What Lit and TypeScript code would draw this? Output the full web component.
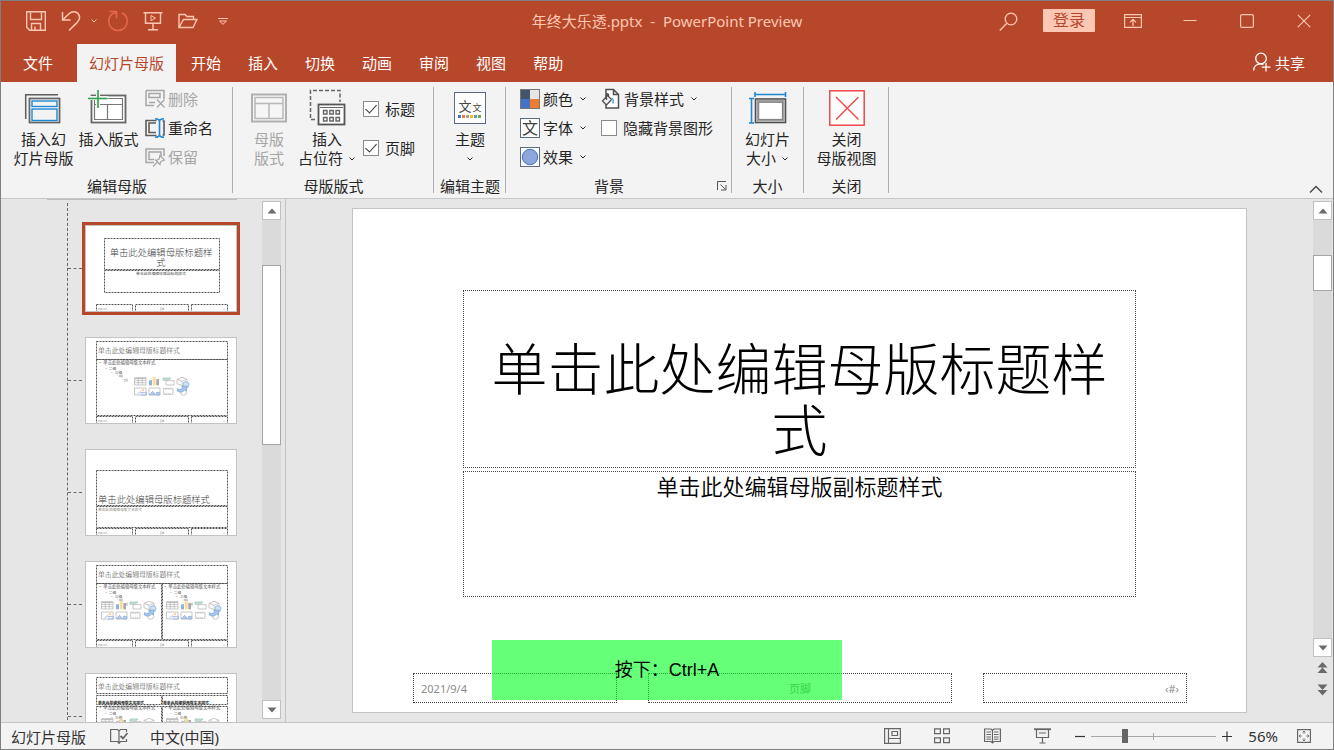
import { LitElement, html, svg, css, nothing, TemplateResult } from "lit";
import { customElement, property, state } from "lit/decorators.js";
import { classMap } from "lit/directives/class-map.js";

const icon = (w: number, h: number, body: TemplateResult | TemplateResult[]) => html`<svg
  width=${w} height=${h} viewBox="0 0 ${w} ${h}" fill="none" stroke="currentColor" aria-hidden="true">${body}</svg>`;

const chevron = () => icon(8, 6, svg`<path d="M1.5 1.5L4 4L6.5 1.5"/>`);

const icons = {
  save: () => icon(20, 20, svg`<path stroke-width="1.4" d="M.7 .7H19.3V19.3H3.7L.7 16.3ZM4.5 .7V8.5H15.5V.7M5.5 19V12.5H14.5V19M9 19V15.5"/>`),
  undo: () => icon(20, 22, svg`<path stroke-width="1.5" d="M1.5 2V10H9.5M1.8 9.7L8 3.8C11 1 15 1.200 17 3.600C19.500 6.500 18.500 10 16 12.600L8 20.500"/>`),
  redo: () => icon(22, 22, svg`<path stroke-width="1.5" d="M2.500 1.500H9.500V8.500M9 2.500C4.500 3.500 1.700 7 1.700 11.300C1.700 16.500 5.900 20.500 11 20.500S20.300 16.500 20.300 11.300C20.300 7.500 18 4.300 14.800 2.800"/>`),
  show: () => icon(20, 20, svg`<path stroke-width="1.4" d="M.5 1.700H19.500M2.500 1.700V12.300H17.500V1.700M10 12.500V18.500M5 18.800H15"/><path d="M8 4.500V9.700L12.500 7.100Z"/>`),
  folder: () => icon(20, 16, svg`<path stroke-width="1.400" d="M1 14.500V1.500H7L9 3.500H15.500V6.500M1 14.500L5.500 6.500H19L15 14.500Z"/>`),
  more: () => icon(12, 8, svg`<path d="M1 1.500H11M2.500 4L6 7.300L9.500 4Z"/>`),
  search: () => icon(19, 20, svg`<circle cx="12" cy="7" r="5.800" stroke-width="1.300"/><path stroke-width="1.300" d="M7.800 11.200L.8 18.500"/>`),
  ribbonOptions: () => icon(18, 14, svg`<path stroke-width="1.200" d="M.6 .6H17.400V13.400H.6ZM.6 3.500H17.400M9 12V5.500M6 8.300L9 5.300L12 8.300"/>`),
  minimize: () => icon(14, 14, svg`<path d="M.5 6.500H13.500"/>`),
  maximize: () => icon(14, 14, svg`<rect x=".6" y=".6" width="12.800" height="12.800" rx="1.500" stroke-width="1.200"/>`),
  close: () => icon(14, 14, svg`<path stroke-width="1.200" d="M.8 .8L13.200 13.200M13.200 .8L.8 13.200"/>`),
  share: () => icon(18, 20, svg`<circle cx="8" cy="6.500" r="5.300" stroke-width="1.300"/><path stroke-width="1.300" d="M.7 18.500C.7 14.500 3.500 11.800 7.500 11.800C9 11.800 10 12.200 10.500 12.500M13 11V19.500M8.700 15.200H17.500"/>`),
  insertMaster: () => icon(42, 36, svg`<path stroke="#5c5c5c" stroke-width="1.500" d="M2.700 29V4.700H35"/><rect x="6.500" y="8.500" width="30" height="24" fill="#fff" stroke="#666" stroke-width="1.800"/><rect x="9" y="11" width="25" height="5.500" fill="#f3f3f3" stroke="#1e87d0" stroke-width="1.400"/><rect x="9" y="19" width="25" height="11.500" fill="#f3f3f3" stroke="#1e87d0" stroke-width="1.400"/>`),
  insertLayout: () => icon(43, 36, svg`<rect x="4.500" y="5.500" width="34" height="27" fill="#fff" stroke="#666" stroke-width="1.800"/><path stroke="#777" stroke-width="1.200" d="M7.500 30V8.500H35.500V29.500H7.500M7.500 14.500H35.500M20.500 14.500V29.500"/><path stroke="#f3f3f3" stroke-width="4" d="M11 0V17M1 8H21"/><path stroke="#2e9e4f" stroke-width="1.600" d="M11 0V18M1 8.500H20.500"/>`),
  remove: () => icon(20, 20, svg`<path stroke="#a6a6a6" stroke-width="1.500" d="M1 1.500H19V10M1 1.500V16.500H9M4 13.500H10M4 8.500H15V4.500H4Z"/><path stroke="#a6a6a6" stroke-width="1.200" d="M12 10.500L19.500 18.500M19.500 10.500L12 18.500"/>`),
  rename: () => icon(20, 20, svg`<path stroke="#5c5c5c" stroke-width="1.600" d="M11.500 2.500H1V17.500H11.500M11 5H4V14.500H11M17.500 3H19V17H17.500"/><path stroke="#1e87d0" stroke-width="1.600" d="M10 .8Q14 .8 14.500 3Q15 .8 19 .8M14.500 3V17M10 19.200Q14 19.200 14.500 17Q15 19.200 19 19.200"/>`),
  keep: () => icon(20, 20, svg`<path stroke="#a6a6a6" stroke-width="1.500" d="M19 9V2H1V15.500H9M16 9V5H4V12.500H9"/><path stroke="#a6a6a6" stroke-width="1.200" d="M8 19.500L12 15.500M10 12.500L15.500 18M11.500 13.500L14 12L15 8.500L19.500 13L16 14.500L14.800 17"/>`),
  masterLayout: () => icon(38, 36, svg`<rect x="2" y="4.500" width="34" height="27" fill="#f6f6f6" stroke="#b0b0b0" stroke-width="2"/><path stroke="#b8b8b8" stroke-width="1.500" d="M5 7.500H33V28.500H5ZM5 13.500H33M19 13.500V28.500"/>`),
  placeholder: () => icon(38, 38, svg`<path stroke="#666" stroke-width="1.500" stroke-dasharray="4 2" d="M7 30.500H2.500V1.500H32V13"/><rect x="10.500" y="15.500" width="26" height="20" fill="#fff" stroke="#555" stroke-width="1.800"/><path stroke="#666" d="M12 18.500H35"/><path stroke="#666" stroke-width="1.400" d="M15.500 21.500H19V25H15.500ZM21.800 21.500H25.300V25H21.800ZM28 21.500H31.500V25H28ZM15.500 28.500H19V32H15.500ZM21.800 28.500H25.300V32H21.800ZM28 28.500H31.500V32H28Z"/>`),
  size: () => icon(40, 36, svg`<path stroke="#1e87d0" stroke-width="1.600" d="M7 4.500H37.500M7 2V7M37.500 2V7M3.500 8.500V33M1 8.500H6M1 33H6"/><rect x="7.500" y="9" width="30" height="23.500" fill="#fff" stroke="#505050" stroke-width="1.600"/><rect x="9.500" y="11" width="26" height="19.500" stroke="#a0a0a0" stroke-width="2.200"/><rect x="10.800" y="12.300" width="23.500" height="17" stroke="#666" stroke-width=".8"/>`),
  closeMaster: () => icon(36, 36, svg`<rect x=".8" y=".8" width="34.400" height="34.400" fill="#fff" stroke="#f0484a" stroke-width="1.500"/><path stroke="#f0484a" stroke-width="1.500" d="M7 7L29.500 29.500M29.500 7L7 29.500"/>`),
  colors: () => icon(20, 20, svg`<path fill="#44546a" stroke="none" d="M1 1H10V10H1Z"/><path fill="#e7e6e6" stroke="none" d="M10 1H19V10H10Z"/><path fill="#4472c4" stroke="none" d="M1 10H10V19H1Z"/><path fill="#ed7d31" stroke="none" d="M10 10H19V19H10Z"/><rect x=".5" y=".5" width="19" height="19" stroke="#777"/>`),
  effects: () => icon(20, 20, svg`<rect x=".5" y=".5" width="19" height="19" fill="#fff" stroke="#5c6b84"/><circle cx="10" cy="10" r="7.700" fill="#8ea6dc" stroke="#4472c4"/>`),
  bgStyle: () => icon(20, 22, svg`<path stroke="#505050" stroke-width="1.500" fill="#fff" d="M5 9V1.500H12.500L17.500 6.500V20H5V16M12.500 1.500V6.500H17.500"/><path stroke="#505050" stroke-width="1.300" fill="#f3f3f3" d="M6.500 7.500L1.500 13L5.500 17L10.500 11.500ZM5.500 12V6.500Q6 5 7.500 6.500V9"/><path stroke="#6ab4e8" stroke-width="1.800" d="M10.500 10.500Q13 11 12 15.500"/>`),
  launcher: () => icon(10, 10, svg`<path stroke="#555" d="M.5 9V.5H9M3.500 3.500L8.500 8.500M9 4V9H4"/>`),
  collapse: () => icon(14, 9, svg`<path stroke="#444" stroke-width="1.300" d="M1 7.500L7 1.500L13 7.500"/>`),
  up: () => icon(10, 6, svg`<path fill="#6a6a6a" stroke="none" d="M.5 5.500L5 .5L9.500 5.500Z"/>`),
  down: () => icon(10, 6, svg`<path fill="#6a6a6a" stroke="none" d="M.5 .5L5 5.500L9.500 .5Z"/>`),
  doubleUp: () => icon(11, 12, svg`<path fill="#6a6a6a" stroke="none" d="M.5 5.500L5.500 0L10.500 5.500ZM.5 11L5.500 5.500L10.500 11Z"/>`),
  doubleDown: () => icon(11, 12, svg`<path fill="#6a6a6a" stroke="none" d="M.5 .5L5.500 6L10.500 .5ZM.5 6L5.500 11.500L10.500 6Z"/>`),
  proof: () => icon(18, 16, svg`<path stroke-width="1.200" d="M9 3V15.300L7.500 13.500H.6V1.500H7.500L9 3L10.500 1.500H16.500V4M9 15.300L10.500 13.500H16.500V11"/><path stroke-width="1.800" d="M10.500 8L13 10.500L17.500 5"/>`),
  normal: () => icon(17, 16, svg`<path stroke-width="1.200" d="M.6 .6H16.400V15.400H.6ZM4.500 .6V15.400M4.500 10.500H16.400M8 3.500H13.500V7.500H8Z"/>`),
  sorter: () => icon(16, 16, svg`<path stroke-width="1.200" d="M.6 .8H6.400V5.600H.6ZM9.600 .8H15.400V5.600H9.600ZM.6 9.800H6.400V14.600H.6ZM9.600 9.800H15.400V14.600H9.600Z"/>`),
  reading: () => icon(17, 16, svg`<path stroke-width="1.200" d="M8.500 2.500V15M8.500 2.500L7 1H.6V13.500H7L8.500 15L10 13.500H16.400V1H10Z"/><path d="M2.500 4H7M2.500 6.500H7M2.500 9H7M2.500 11.200H7M10 4H14.500M10 6.500H14.500M10 9H14.500M10 11.200H14.500"/>`),
  slideshow: () => icon(17, 16, svg`<path stroke-width="1.800" d="M0 1.200H17"/><path stroke-width="1.200" d="M2.500 1V9.500H14.500V1M5 5H12M8.500 9.500V15M5.500 15H11.500"/>`),
  minus: () => icon(10, 11, svg`<path stroke-width="1.200" d="M0 5.500H10"/>`),
  plus: () => icon(10, 11, svg`<path stroke-width="1.200" d="M0 5.500H10M5 .5V10.500"/>`),
  fit: () => icon(14, 14, svg`<rect x=".6" y=".6" width="12.800" height="12.800" stroke-width="1.200"/><path d="M7 2V5M7 9V12M2 7H5M9 7H12M5.500 3.500L7 2L8.500 3.500M5.500 10.500L7 12L8.500 10.500M3.500 5.500L2 7L3.500 8.500M10.500 5.500L12 7L10.500 8.500" stroke-width=".8"/>`),
};

const base = css`
  :host { box-sizing: border-box; font-family: "Noto Sans", "Noto Sans CJK SC", sans-serif; font-size: 15px; }
  * { box-sizing: border-box; }
  svg { display: block; flex: none; }
  button { font: inherit; color: inherit; background: none; border: 0; margin: 0; padding: 0; display: flex; align-items: center; justify-content: center; }
`;

type Layout = "title" | "content" | "section" | "two" | "compare";

const TITLE = "单击此处编辑母版标题样式";
const BODY = "单击此处编辑母版文本样式";

/* Miniature of one slide layout; one thumbnail pixel is six drawing units. */
@customElement("layout-thumb")
export class LayoutThumb extends LitElement {
  @property() layout: Layout = "title";

  static styles = css`
    :host { box-sizing: border-box; display: block; width: 152px; height: 87px; border: 1px solid #c3c3c3; background: #fff; overflow: hidden; }
    .mini { display: block; width: 100%; height: 100%; font-family: "Noto Sans CJK SC", sans-serif; }
    .frame { fill: none; stroke: #555; stroke-width: 6; stroke-dasharray: 12 6; }
    .heading { font-size: 56px; font-weight: 300; fill: #444; }
    .small { font-size: 41px; font-weight: 300; fill: #444; }
    .sub { font-size: 23px; fill: #444; }
    .dim { font-size: 22px; fill: #8b8478; }
    .text { font-size: 26px; fill: #555; }
    .bold { font-size: 23px; font-weight: 700; fill: #222; }
    .tiny { font-size: 13px; fill: #777; }
    .mid { text-anchor: middle; }
    .end { text-anchor: end; }
  `;

  private frame(x: number, y: number, w: number, h: number) {
    return svg`<rect class="frame" x=${x * 6 + 3} y=${y * 6 + 3} width=${w * 6} height=${h * 6}/>`;
  }
  private text(cls: string, x: number, y: number, s: string) {
    return svg`<text class=${cls} x=${x * 6} y=${y * 6}>${s}</text>`;
  }
  private footers() {
    return svg`${this.frame(10, 78, 36, 10)}${this.frame(49, 78, 53, 10)}${this.frame(105, 78, 36, 10)}
      ${this.text("tiny", 12, 84, "2021/9/4")}${this.text("tiny mid", 76, 84, "页脚")}${this.text("tiny end", 139, 84, "‹#›")}`;
  }
  private outline(x: number, y: number) {
    return svg`${this.text("text", x, y, "• " + BODY)}${this.text("sub", x + 6, y + 6, "• 二级")}
      ${this.text("sub", x + 12, y + 10, "• 三级")}${this.text("tiny", x + 18, y + 13, "• 四级")}${this.text("tiny", x + 23, y + 17, "• 五级")}`;
  }
  private media(x: number, y: number) {
    return svg`<g transform="translate(${x * 6} ${y * 6})" fill="none" stroke="#bdbdbd" stroke-width="5">
      <path d="M3 6H72V48H3ZM3 20H72M3 34H72M26 6V48M49 6V48"/><path stroke-width="9" d="M3 7H72"/>
      <path stroke="none" fill="#8fb2dd" d="M90 20H108V50H90Z"/><path stroke="none" fill="#f7dc9c" d="M112 2H130V50H112Z"/><path stroke="none" fill="#a9a9a9" d="M134 12H150V50H134Z"/>
      <path stroke="#a5cdbb" fill="#c5dfd2" d="M174 6H222L206 20H174Z"/><path fill="#fff" d="M192 22H240V48H192Z"/>
      <path d="M258 14L288 2L318 14V40L288 52L258 40ZM258 14L288 26L318 14M288 26V52"/>
      <path d="M3 66H72V108H3Z"/><circle cx="54" cy="78" r="5" stroke="#f0c56a"/><path stroke="#8fb2dd" d="M20 104L38 88L50 98M40 94H76V108H40"/>
      <path d="M90 66H156V108H90Z"/><path stroke="#8fb2dd" fill="#b4cdea" d="M92 106L112 86L128 106ZM134 92H154V108H134Z"/>
      <path d="M178 68H234V104H178Z"/><path stroke-dasharray="5 6" d="M184 74H230M184 98H230"/>
      <circle cx="298" cy="92" r="18"/><circle cx="312" cy="46" r="18" stroke="#8fb2dd" fill="#cfe0f4"/>
      <path stroke="#7fa8dd" fill="#a9c6ea" d="M260 70Q276 84 292 68L286 58L318 54L314 84L304 78Q284 100 260 84Z"/>
    </g>`;
  }

  private drawing() {
    switch (this.layout) {
      case "title":
        return svg`${this.frame(18, 12, 115, 31)}${this.frame(18, 44, 115, 22)}
          <text class="heading mid" x="450" y="180">${TITLE.slice(0, 11)}<tspan x="450" dy="62">${TITLE.slice(11)}</tspan></text>
          ${this.text("sub mid", 75, 49, "单击此处编辑母版副标题样式")}`;
      case "content":
        return svg`${this.frame(10, 3, 131, 18)}${this.frame(10, 21, 131, 56)}
          ${this.text("small", 12, 15, TITLE)}${this.outline(12, 26)}${this.media(48, 39)}`;
      case "section":
        return svg`${this.frame(10, 20, 131, 35)}${this.frame(10, 56, 131, 21)}
          ${this.text("heading", 12, 53, TITLE)}${this.text("dim", 12, 61, BODY)}`;
      case "two":
        return svg`${this.frame(10, 3, 131, 18)}${this.frame(10, 21, 65, 56)}${this.frame(76, 21, 65, 56)}
          ${this.text("small", 12, 15, TITLE)}${this.outline(12, 26)}${this.outline(77, 26)}${this.media(15, 39)}${this.media(80, 39)}`;
      default:
        return svg`${this.frame(10, 3, 131, 16)}${this.frame(10, 21, 65, 9)}${this.frame(76, 21, 65, 9)}
          ${this.frame(10, 32, 65, 45)}${this.frame(76, 32, 65, 45)}
          ${this.text("small", 12, 15, TITLE)}${this.text("bold", 12, 30, BODY)}${this.text("bold", 77, 30, BODY)}
          ${this.outline(12, 35)}${this.outline(77, 35)}${this.media(15, 44)}${this.media(80, 44)}`;
    }
  }

  render() {
    return html`<svg class="mini" viewBox="0 0 900 510">${this.drawing()}${this.footers()}</svg>`;
  }
}

@customElement("scroll-track")
export class ScrollTrack extends LitElement {
  @property({ type: Number }) before = 0;
  @property({ type: Number }) thumb = 0;

  static styles = [base, css`
    :host { display: flex; flex-direction: column; width: 19px; background: #dadada; }
    .arrow { height: 19px; width: 19px; background: #fff; border: 1px solid #c0c0c0; flex: none; }
    .rail { flex: 1; }
    .thumb { background: #fff; border: 1px solid #a6a6a6; }
  `];

  render() {
    return html`
      <button class="arrow" aria-label="向上滚动">${icons.up()}</button>
      <div class="rail">
        <div style="height:${this.before}%"></div>
        <div class="thumb" style="height:${this.thumb}%"></div>
      </div>
      <button class="arrow" aria-label="向下滚动">${icons.down()}</button>`;
  }
}

@customElement("app-root")
export class AppRoot extends LitElement {
  @state() private tab = "幻灯片母版";
  @state() private selected = 0;

  private tabs = ["幻灯片母版", "开始", "插入", "切换", "动画", "审阅", "视图", "帮助"];
  private layouts: Layout[] = ["title", "content", "section", "two", "compare"];

  static styles = [base, css`
    :host { display: flex; flex-direction: column; height: 100vh; min-height: 480px; position: relative; border: 1px solid #808080; background: #e6e6e6; color: #262626; overflow: hidden; }

    .titlebar { background: #b7472a; color: #fcc8b4; height: 43px; padding-bottom: 4px; display: grid; grid-template-columns: 1fr auto 1fr; align-items: center; flex: none; }
    .quick { display: flex; padding-left: 17px; }
    .quick button { width: 35px; height: 38px; }
    .quick .narrow { width: 12px; }
    .quick .off { color: #e5694b; }
    .doc { font-size: 15px; font-weight: 400; margin: 0; white-space: pre; line-height: 38px; }
    .window { display: flex; justify-content: flex-end; align-items: center; padding-right: 1px; }
    .window button { width: 57px; height: 38px; }
    .window .find { width: 40px; margin-right: 15px; padding-top: 3px; }
    .window .login { width: 52px; height: 23px; background: #fcc8b4; color: #b7472a; margin-right: 9px; border-radius: 1px; font-size: 16px; line-height: 23px; }

    .tabs { background: #b7472a; color: #fff; height: 38px; display: flex; gap: 3px; padding: 0 16px 0 10px; flex: none; }
    .tab { padding: 0 12px 2px; height: 38px; white-space: nowrap; }
    .tab.file { margin-right: 9px; }
    .tab.on { background: #f3f3f3; color: #b7472a; }
    .share { margin-left: auto; gap: 4px; padding: 0 12px 2px; height: 38px; }

    .ribbon { background: #f3f3f3; border-bottom: 1px solid #c8c8c8; display: flex; flex: none; height: 117px; }
    .group { display: flex; flex-direction: column; padding: 2px 0 4px; background: linear-gradient(#b0b0b0, #b0b0b0) right center / 1px calc(100% - 10px) no-repeat; }
    .body { display: flex; flex: 1; justify-content: center; align-items: flex-start; }
    .caption { display: flex; height: 16px; line-height: 16px; justify-content: center; align-items: center; }
    .caption span { flex: 1; text-align: center; }
    .caption button { width: 20px; height: 16px; }
    .big { flex-direction: column; justify-content: flex-start; padding-top: 6px; width: 65px; line-height: 19px; }
    .big .art { height: 36px; margin-bottom: 4px; display: flex; align-items: center; justify-content: center; }
    .big .row { display: flex; align-items: center; height: 19px; gap: 5px; white-space: nowrap; }
    .off { color: #a6a6a6; }
    .rows { display: flex; flex-direction: column; align-items: flex-start; }
    .mini { height: 29px; gap: 3px; padding: 0 4px; white-space: nowrap; }
    .mini .drop { margin-left: 3px; display: flex; }
    .check { display: flex; align-items: center; gap: 6px; height: 29px; white-space: nowrap; }
    .check input { appearance: none; width: 16px; height: 16px; margin: 0; background: #fff; border: 1px solid #8a8a8a; display: grid; place-items: start center; }
    .check input:checked::before { content: ""; width: 5px; height: 10px; border: solid #333; border-width: 0 1px 1px 0; transform: rotate(42deg); }
    .checks { padding-top: 10px; gap: 10px; margin-left: 2px; }
    .g-edit .body { padding: 0 16px 0 10px; }
    .g-layout .body { padding: 0 19px 0 12px; }
    .g-layout .narrow { width: 48px; }
    .g-layout .wide { width: 68px; }
    .g-theme { padding-left: 6px; padding-right: 6px; }
    .g-theme .big { width: 60px; }
    .g-back .body { padding: 0 15px 0 10px; justify-content: flex-start; }
    .g-back .second { margin-left: 6px; }
    .g-back .check { padding: 0 4px; }
    .g-size { padding-left: 3px; padding-right: 4px; }
    .g-close { padding-left: 10px; padding-right: 10px; }
    .theme, .font { background: #fff; border: 1px solid #5c6b84; display: flex; align-items: center; justify-content: center; color: #444; }
    .theme { width: 32px; height: 32px; flex-direction: column; justify-content: flex-end; padding-bottom: 5px; font-size: 13px; line-height: 14px; }
    .theme .pair { display: flex; align-items: baseline; gap: 1px; }
    .theme small { font-size: 9px; }
    .font { width: 20px; height: 20px; font-size: 16px; line-height: 18px; }
    .collapse { margin-left: auto; align-self: flex-end; width: 34px; height: 18px; }

    .work { flex: 1; min-height: 0; display: flex; }
    .panel { display: flex; width: 285px; flex: none; padding-right: 4px; border-right: 1px solid #c3c3c3; }
    .list { flex: 1; overflow: hidden; }
    .previous { margin-left: 46px; width: 190px; height: 1px; background: #bdbdbd; }
    .tree { list-style: none; margin: 3px 0 0 66px; padding: 22px 0 0; border-left: 1px dashed #666; display: flex; flex-direction: column; gap: 25px; }
    .node { display: flex; align-items: center; gap: 3px; }
    .node::before { content: ""; width: 14px; border-top: 1px dashed #666; }
    .pick.on { outline: 3px solid #b7472a; }
    .panel scroll-track { margin: 2px 0 3px; }

    .canvas { flex: 1; min-width: 0; display: flex; justify-content: center; padding: 9px; }
    .slide { position: relative; height: 100%; aspect-ratio: 895 / 505; background: #fff; border: 1px solid #c3c3c3; font-family: "Noto Sans CJK SC", sans-serif; color: #000; }
    .ph { position: absolute; border: 1px dotted #444; display: flex; justify-content: center; text-align: center; }
    .ph-title { left: 12.32%; top: 16.1%; width: 75.36%; height: 35.39%; align-items: flex-end; padding: 0 15px 10px; font-size: 56px; line-height: 61px; font-weight: 300; }
    .ph-title h2 { font: inherit; margin: 0; }
    .ph-sub { left: 12.32%; top: 52.09%; width: 75.36%; height: 25.05%; font-size: 22px; line-height: 26px; font-weight: 350; }
    .ph-date, .ph-foot, .ph-num { top: 92.25%; height: 5.96%; align-items: center; font-size: 11px; color: #8b8b8b; padding: 0 7px; font-family: "Noto Sans", "Noto Sans CJK SC", sans-serif; }
    .ph-date { left: 6.72%; width: 22.84%; justify-content: flex-start; }
    .ph-foot { left: 33.03%; width: 34.04%; }
    .ph-num { left: 70.55%; width: 22.84%; justify-content: flex-end; }
    .side { display: flex; flex-direction: column; width: 20px; padding: 2px 1px 0 0; }
    .side scroll-track { flex: 1; }
    .side .jump { height: 22px; width: 19px; }
    .side .last { margin-bottom: 21px; }

    .status { height: 27px; flex: none; background: #f3f3f3; border-top: 1px solid #c3c3c3; display: flex; align-items: center; padding: 0 22px 0 10px; color: #333; }
    .status button { color: inherit; height: 26px; }
    .status .proof { margin: 0 22px 0 24px; color: #666; }
    .views { margin-left: auto; display: flex; color: #666; }
    .views button { width: 50px; }
    .zoom { display: flex; align-items: center; gap: 6px; margin-left: 8px; }
    .zoom input { appearance: none; width: 125px; height: 14px; margin: 0; background: linear-gradient(#a6a6a6, #a6a6a6) center / 100% 1px no-repeat, linear-gradient(#a6a6a6, #a6a6a6) center / 1px 7px no-repeat; }
    .zoom input::-webkit-slider-thumb { appearance: none; width: 6px; height: 14px; background: #666; }
    .percent { margin: 0 19px 0 16px; }
    .status .fit { color: #666; }

    .hint { position: absolute; left: 0; right: 0; bottom: 49px; margin: 0 auto; width: 350px; height: 60px; background: rgba(0, 255, 30, 0.6); color: #000; font-family: "Liberation Sans", "Noto Sans CJK SC", sans-serif; font-size: 18px; line-height: 60px; text-align: center; }
  `];

  private group(cls: string, label: string, body: TemplateResult, launcher = false) {
    return html`<section class="group ${cls}" aria-label=${label}>
      <div class="body">${body}</div>
      <div class="caption"><span>${label}</span>${launcher ? html`<button aria-label="设置背景格式">${icons.launcher()}</button>` : nothing}</div>
    </section>`;
  }

  private big(art: unknown, first: string, second = "", drop = false, cls = "") {
    return html`<button class="big ${cls}" ?disabled=${cls.includes("off")}>
      <span class="art">${art}</span>
      <span class="row">${first}</span>
      ${second || drop ? html`<span class="row">${second}${drop ? chevron() : nothing}</span>` : nothing}
    </button>`;
  }

  private small(art: unknown, label: string, drop = false, cls = "") {
    return html`<button class="mini ${cls}" ?disabled=${cls === "off"}>${art}<span>${label}</span>${drop ? html`<span class="drop">${chevron()}</span>` : nothing}</button>`;
  }

  private themeArt() {
    const swatches = ["#4472c4", "#ed7d31", "#a5a5a5", "#ffc000", "#5b9bd5", "#70ad47"];
    return html`<span class="theme"><span class="pair">文<small>文</small></span>
      ${icon(24, 3, swatches.map((c, i) => svg`<rect x=${i * 4} y="0" width="3" height="3" fill=${c} stroke="none"/>`))}</span>`;
  }

  render() {
    return html`
      <header class="titlebar">
        <div class="quick">
          <button aria-label="保存">${icons.save()}</button>
          <button aria-label="撤消">${icons.undo()}</button>
          <button class="narrow" aria-label="撤消列表">${chevron()}</button>
          <button class="off" aria-label="恢复">${icons.redo()}</button>
          <button aria-label="从头开始">${icons.show()}</button>
          <button aria-label="打开">${icons.folder()}</button>
          <button aria-label="自定义快速访问工具栏">${icons.more()}</button>
        </div>
        <h1 class="doc">年终大乐透.pptx  -  PowerPoint Preview</h1>
        <div class="window">
          <button class="find" aria-label="搜索">${icons.search()}</button>
          <button class="login">登录</button>
          <button aria-label="功能区显示选项">${icons.ribbonOptions()}</button>
          <button aria-label="最小化">${icons.minimize()}</button>
          <button aria-label="最大化">${icons.maximize()}</button>
          <button aria-label="关闭">${icons.close()}</button>
        </div>
      </header>

      <nav class="tabs">
        <button class="tab file">文件</button>
        ${this.tabs.map((t) => html`<button class=${classMap({ tab: true, on: t === this.tab })} @click=${() => (this.tab = t)}>${t}</button>`)}
        <button class="share">${icons.share()}<span>共享</span></button>
      </nav>

      <div class="ribbon">
        ${this.group("g-edit", "编辑母版", html`
          ${this.big(icons.insertMaster(), "插入幻", "灯片母版")}
          ${this.big(icons.insertLayout(), "插入版式")}
          <div class="rows">
            ${this.small(icons.remove(), "删除", false, "off")}
            ${this.small(icons.rename(), "重命名")}
            ${this.small(icons.keep(), "保留", false, "off")}
          </div>`)}
        ${this.group("g-layout", "母版版式", html`
          ${this.big(icons.masterLayout(), "母版", "版式", false, "narrow off")}
          ${this.big(icons.placeholder(), "插入", "占位符", true, "wide")}
          <div class="rows checks">
            <label class="check"><input type="checkbox" checked />标题</label>
            <label class="check"><input type="checkbox" checked />页脚</label>
          </div>`)}
        ${this.group("g-theme", "编辑主题", html`${this.big(this.themeArt(), "主题", "", true)}`)}
        ${this.group("g-back", "背景", html`
          <div class="rows">
            ${this.small(icons.colors(), "颜色", true)}
            ${this.small(html`<span class="font">文</span>`, "字体", true)}
            ${this.small(icons.effects(), "效果", true)}
          </div>
          <div class="rows second">
            ${this.small(icons.bgStyle(), "背景样式", true)}
            <label class="check"><input type="checkbox" />隐藏背景图形</label>
          </div>`, true)}
        ${this.group("g-size", "大小", html`${this.big(icons.size(), "幻灯片", "大小", true)}`)}
        ${this.group("g-close", "关闭", html`${this.big(icons.closeMaster(), "关闭", "母版视图")}`)}
        <button class="collapse" aria-label="折叠功能区">${icons.collapse()}</button>
      </div>

      <main class="work">
        <aside class="panel">
          <div class="list">
            <div class="previous"></div>
            <ul class="tree">
              ${this.layouts.map((l, i) => html`<li class="node">
                <button class=${classMap({ pick: true, on: i === this.selected })} @click=${() => (this.selected = i)}><layout-thumb .layout=${l}></layout-thumb></button>
              </li>`)}
            </ul>
          </div>
          <scroll-track .before=${9.4} .thumb=${37.4}></scroll-track>
        </aside>
        <div class="canvas">
          <article class="slide">
            <div class="ph ph-title"><h2>${TITLE}</h2></div>
            <div class="ph ph-sub">单击此处编辑母版副标题样式</div>
            <div class="ph ph-date">2021/9/4</div>
            <div class="ph ph-foot">页脚</div>
            <div class="ph ph-num">‹#›</div>
          </article>
        </div>
        <div class="side">
          <scroll-track .before=${8.4} .thumb=${8.6}></scroll-track>
          <button class="jump" aria-label="上一张幻灯片">${icons.doubleUp()}</button>
          <button class="jump last" aria-label="下一张幻灯片">${icons.doubleDown()}</button>
        </div>
      </main>

      <footer class="status">
        <span>幻灯片母版</span>
        <button class="proof" aria-label="拼写检查">${icons.proof()}</button>
        <button>中文(中国)</button>
        <div class="views">
          <button aria-label="普通视图">${icons.normal()}</button>
          <button aria-label="幻灯片浏览">${icons.sorter()}</button>
          <button aria-label="阅读视图">${icons.reading()}</button>
          <button aria-label="幻灯片放映">${icons.slideshow()}</button>
        </div>
        <div class="zoom">
          <button aria-label="缩小">${icons.minus()}</button>
          <input type="range" min="0" max="100" value="26" aria-label="缩放" />
          <button aria-label="放大">${icons.plus()}</button>
        </div>
        <button class="percent">56%</button>
        <button class="fit" aria-label="适应窗口">${icons.fit()}</button>
      </footer>

      <div class="hint">按下：Ctrl+A</div>
    `;
  }
}
